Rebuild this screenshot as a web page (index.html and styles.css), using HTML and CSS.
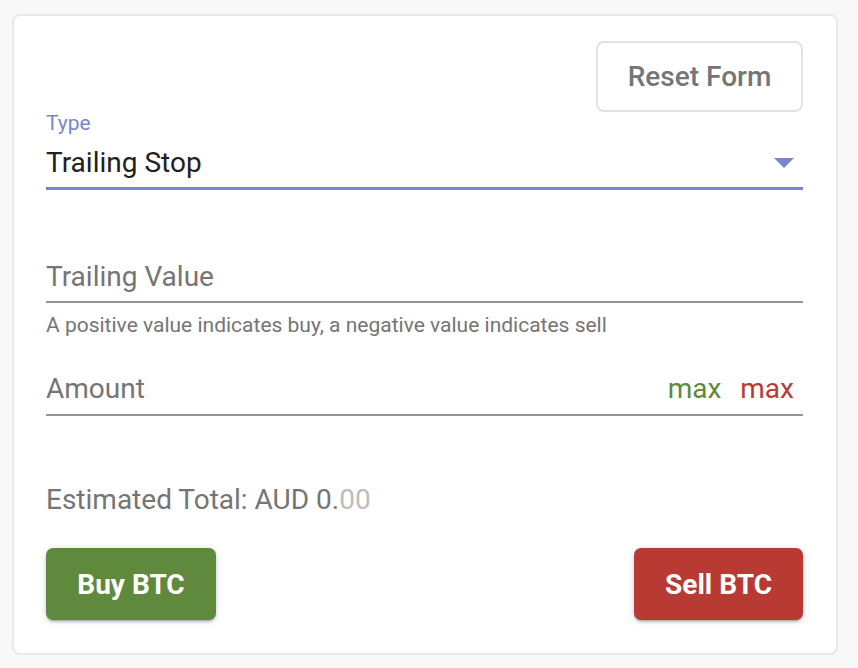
FILE: index.html
```html
<!DOCTYPE html>
<html lang="en">
<head>
<meta charset="utf-8">
<title>Trailing Stop Order</title>
<link rel="stylesheet" href="styles.css">
</head>
<body>
<div class="card">
  <div class="reset-row">
    <button class="reset-btn" type="button">Reset Form</button>
  </div>
  <div class="type-field">
    <div class="field-label">Type</div>
    <div class="select-row">
      <span class="select-value">Trailing Stop</span>
      <span class="arrow"></span>
    </div>
  </div>
  <div class="input-field trailing">
    <span class="placeholder">Trailing Value</span>
  </div>
  <div class="helper">A positive value indicates buy, a negative value indicates sell</div>
  <div class="input-field amount">
    <span class="placeholder">Amount</span>
    <span class="max-group">
      <span class="max max-buy">max</span>
      <span class="max max-sell">max</span>
    </span>
  </div>
  <div class="total">Estimated Total: AUD 0.<span class="faint">00</span></div>
  <div class="actions">
    <button class="action-btn buy" type="button">Buy BTC</button>
    <button class="action-btn sell" type="button">Sell BTC</button>
  </div>
</div>
</body>
</html>
```

FILE: styles.css
```css
html, body {
  margin: 0;
  padding: 0;
  background: #f8f8f8;
  font-family: Roboto, "Liberation Sans", Arial, sans-serif;
}

.card {
  margin: 14px 20px 0 12px;
  background: #ffffff;
  border: 2px solid #e9e9e9;
  border-radius: 8px;
  padding: 25px 33px 33px 32px;
}

.reset-row {
  display: flex;
  justify-content: flex-end;
  height: 70px;
}

.reset-btn {
  width: 207px;
  height: 71px;
  background: #ffffff;
  border: 2px solid #e2e2e2;
  border-radius: 8px;
  font-family: inherit;
  font-size: 28px;
  font-weight: 500;
  color: #757575;
  padding: 0;
}

.field-label {
  font-size: 21px;
  line-height: 24px;
  color: #7986cb;
}

.select-row {
  display: flex;
  align-items: center;
  justify-content: space-between;
  padding: 14px 9px 10px 0;
  border-bottom: 3px solid #7986cb;
}

.select-value {
  font-size: 28px;
  line-height: 28px;
  color: #212121;
}

.arrow {
  width: 0;
  height: 0;
  border-left: 10px solid transparent;
  border-right: 10px solid transparent;
  border-top: 10px solid #7986cb;
}

.input-field {
  display: flex;
  align-items: center;
  justify-content: space-between;
  border-bottom: 2px solid #949494;
  font-size: 28px;
  line-height: 30px;
}

.trailing {
  margin-top: 72px;
  padding-bottom: 9px;
}

.amount {
  margin-top: 37px;
  padding-bottom: 10px;
}

.placeholder {
  color: #757575;
}

.helper {
  margin-top: 10px;
  font-size: 21px;
  line-height: 24px;
  color: #757575;
}

.max-group {
  display: flex;
  gap: 19px;
  padding-right: 9px;
}

.max-buy {
  color: #5e8a3c;
}

.max-sell {
  color: #b83a33;
}

.total {
  margin-top: 69px;
  font-size: 28px;
  line-height: 30px;
  color: #757575;
}

.faint {
  color: #bdbdbd;
}

.actions {
  margin-top: 33px;
  display: flex;
  justify-content: space-between;
}

.action-btn {
  height: 72px;
  border: none;
  border-radius: 7px;
  font-family: inherit;
  font-size: 28px;
  font-weight: 700;
  color: #ffffff;
  padding: 0;
  box-shadow: 0 3px 2px -2px rgba(0,0,0,0.2), 0 2px 3px 0 rgba(0,0,0,0.14), 0 1px 8px 0 rgba(0,0,0,0.12);
}

.buy {
  width: 170px;
  background: #5f8a3d;
}

.sell {
  width: 169px;
  background: #b83a32;
}
```
